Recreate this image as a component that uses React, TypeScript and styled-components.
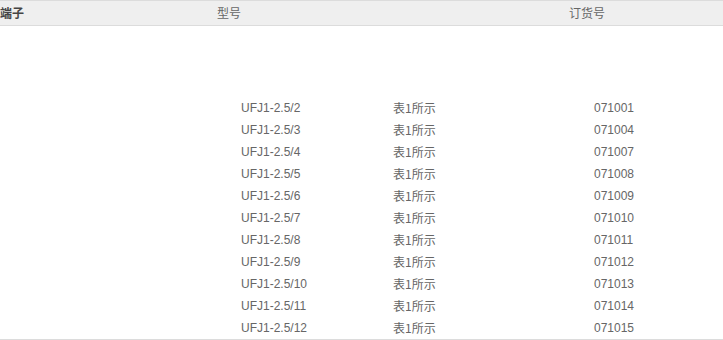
import React from "react";
import styled, { createGlobalStyle } from "styled-components";

const Global = createGlobalStyle`
  html, body { margin: 0; padding: 0; background: #fff; }
  body { font-family: "Liberation Sans", Arial, "Noto Sans CJK SC", sans-serif; font-size: 12px; color: #666; }
`;

const Page = styled.div`
  width: 723px;
  height: 340px;
  display: flex;
  flex-direction: column;
  overflow: hidden;
`;

const Header = styled.div`
  display: grid;
  grid-template-columns: 217px 352px 1fr;
  height: 24px;
  line-height: 24px;
  background: #efefef;
  border-top: 1px solid #dcdcdc;
  border-bottom: 1px solid #dcdcdc;
  color: #666;
  font-family: "Noto Sans CJK SC", sans-serif;
  font-size: 12px;
`;

const HeadCell = styled.div<{ $bold?: boolean }>`
  font-weight: ${(p) => (p.$bold ? 700 : 400)};
  color: ${(p) => (p.$bold ? "#444" : "#666")};
`;

const Body = styled.div`
  display: flex;
  flex-direction: column;
  padding-top: 71px;
  border-bottom: 1px solid #dcdcdc;
`;

const Row = styled.div`
  display: grid;
  grid-template-columns: 152px 201px 1fr;
  padding-left: 241px;
  height: 22px;
  line-height: 22px;
`;

const Cell = styled.div<{ $cjk?: boolean }>`
  font-family: ${(p) =>
    p.$cjk
      ? `"Noto Sans CJK SC", sans-serif`
      : `"Liberation Sans", Arial, sans-serif`};
  color: #666;
  white-space: nowrap;
`;

const rows = [
  ["UFJ1-2.5/2", "071001"],
  ["UFJ1-2.5/3", "071004"],
  ["UFJ1-2.5/4", "071007"],
  ["UFJ1-2.5/5", "071008"],
  ["UFJ1-2.5/6", "071009"],
  ["UFJ1-2.5/7", "071010"],
  ["UFJ1-2.5/8", "071011"],
  ["UFJ1-2.5/9", "071012"],
  ["UFJ1-2.5/10", "071013"],
  ["UFJ1-2.5/11", "071014"],
  ["UFJ1-2.5/12", "071015"],
];

export default function App() {
  return (
    <>
      <Global />
      <Page>
        <Header>
          <HeadCell $bold>端子</HeadCell>
          <HeadCell>型号</HeadCell>
          <HeadCell>订货号</HeadCell>
        </Header>
        <Body>
          {rows.map(([model, code]) => (
            <Row key={model}>
              <Cell>{model}</Cell>
              <Cell $cjk>表1所示</Cell>
              <Cell>{code}</Cell>
            </Row>
          ))}
        </Body>
      </Page>
    </>
  );
}
